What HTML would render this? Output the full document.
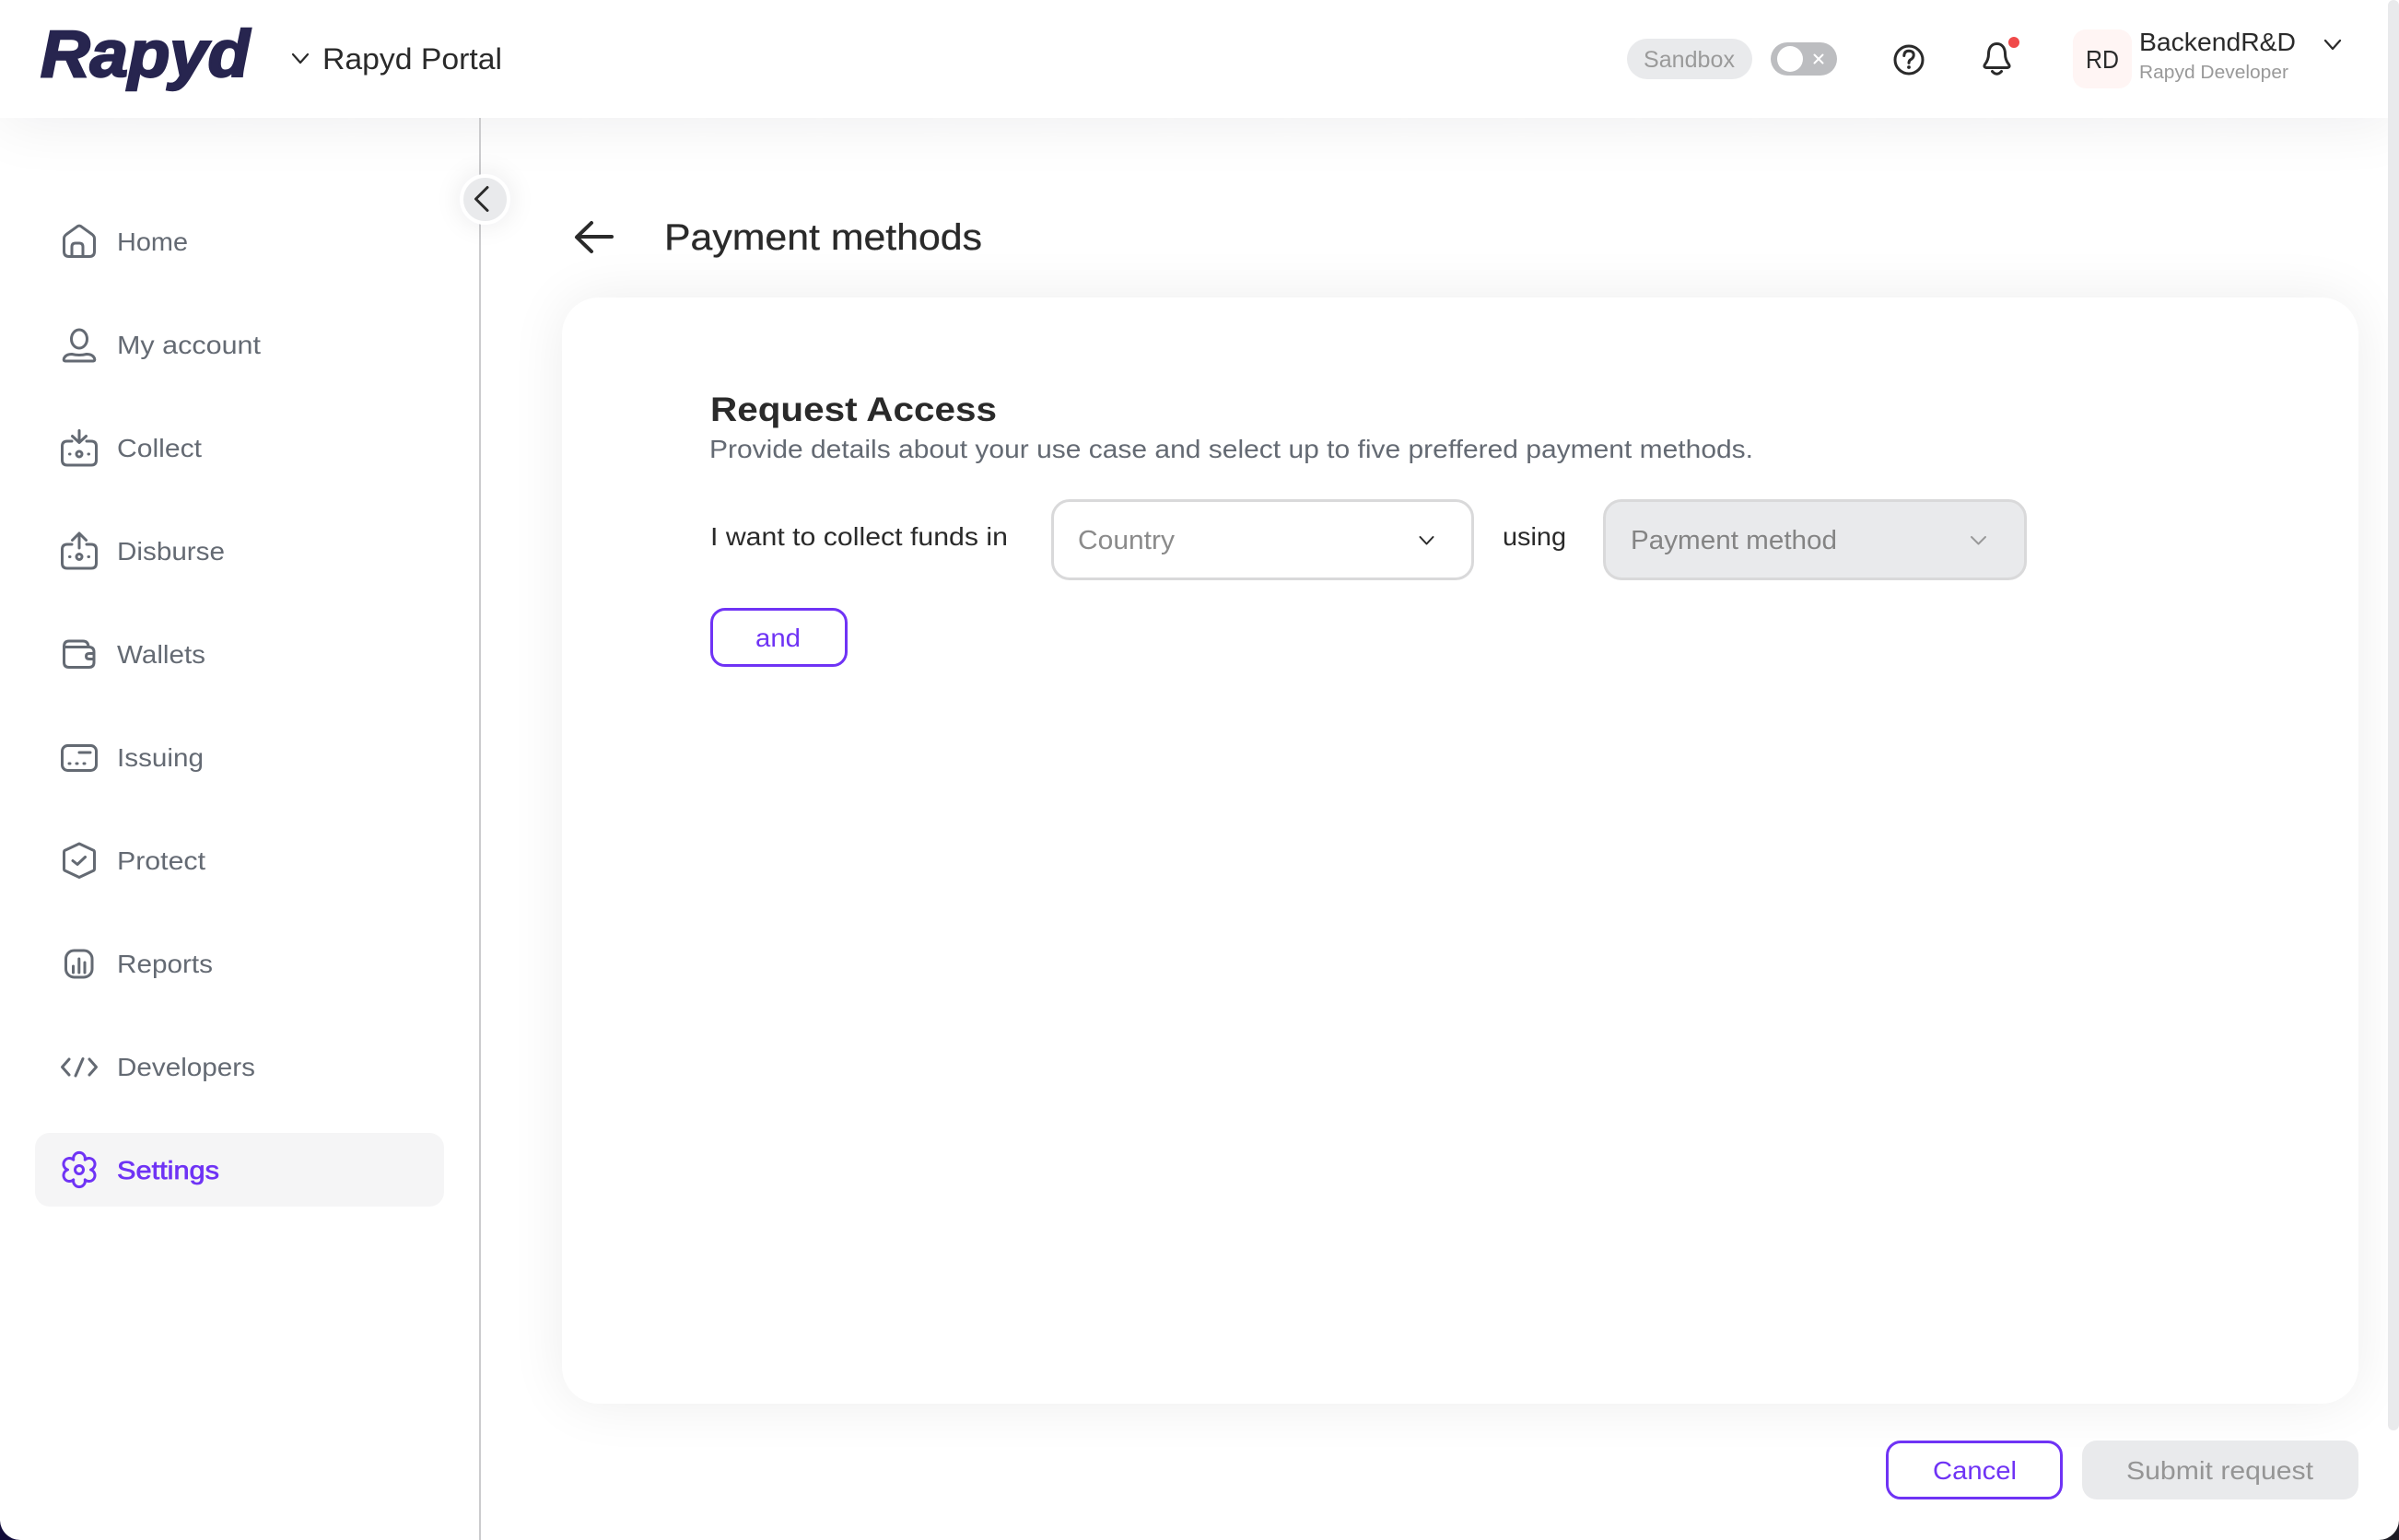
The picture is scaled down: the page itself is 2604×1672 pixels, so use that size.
<!DOCTYPE html>
<html lang="en">
<head>
<meta charset="utf-8">
<title>Payment methods</title>
<style>
html,body{margin:0;padding:0;width:2604px;height:1672px;overflow:hidden;background:#fff;font-family:"Liberation Sans",sans-serif}
.a{position:absolute;box-sizing:border-box}
#hdr{left:0;top:0;width:2604px;height:128px;background:#fff;box-shadow:0 0 70px rgba(20,20,30,.085);z-index:2}
#card{left:610px;top:323px;width:1950px;height:1201px;background:#fff;border-radius:40px;box-shadow:0 0 60px rgba(20,20,30,.075);z-index:1}
#div{left:520px;top:128px;width:2px;height:1544px;background:#cbcbcd;z-index:3}
#act{left:38px;top:1230px;width:444px;height:80px;background:#f5f5f6;border-radius:16px;z-index:3}
#col{left:499px;top:189px;width:55px;height:55px;border-radius:50%;background:#e9eaec;border:4px solid #fff;box-shadow:0 0 30px rgba(20,20,30,.09);z-index:4}
#sb{left:2592px;top:0;width:12px;height:1553px;background:#e9eaec;border-radius:6px;z-index:5}
#pill{left:1766px;top:42px;width:136px;height:44px;border-radius:22px;background:#e9eaec;z-index:4}
#tog{left:1922px;top:46px;width:72px;height:36px;border-radius:18px;background:#bcbdc0;z-index:4}
#knob{left:1929px;top:50px;width:28px;height:28px;border-radius:50%;background:#fff;z-index:5}
#av{left:2250px;top:32px;width:64px;height:64px;border-radius:14px;background:#fff5f4;z-index:4}
#s1{left:1141px;top:542px;width:459px;height:88px;border:3px solid #d9d9da;border-radius:20px;background:#fff;z-index:3}
#s2{left:1740px;top:542px;width:460px;height:88px;border:3px solid #d9d9da;border-radius:20px;background:#e9eaec;z-index:3}
#and{left:771px;top:660px;width:149px;height:64px;border:3px solid #6f33f5;border-radius:16px;background:#fff;z-index:3}
#can{left:2047px;top:1564px;width:192px;height:64px;border:3px solid #6f33f5;border-radius:16px;background:#fff;z-index:3}
#sub{left:2260px;top:1564px;width:300px;height:64px;border-radius:16px;background:#e9eaec;z-index:3}
svg{position:absolute;left:0;top:0;z-index:6}
text{font-family:"Liberation Sans",sans-serif;font-size:27.5px}
.n{fill:#646a73}
.d{fill:#2a2a2a}
.i{fill:none;stroke:#646a73;stroke-width:3;stroke-linecap:round;stroke-linejoin:round}
.k{fill:none;stroke:#2a2a2a;stroke-width:3;stroke-linecap:round;stroke-linejoin:round}
</style>
</head>
<body>
<div class="a" id="hdr"></div>
<div class="a" id="card"></div>
<div class="a" id="div"></div>
<div class="a" id="act"></div>
<div class="a" id="col"></div>
<div class="a" id="sb"></div>
<div class="a" id="pill"></div>
<div class="a" id="tog"></div>
<div class="a" id="knob"></div>
<div class="a" id="av"></div>
<div class="a" id="s1"></div>
<div class="a" id="s2"></div>
<div class="a" id="and"></div>
<div class="a" id="can"></div>
<div class="a" id="sub"></div>

<svg width="2604" height="1672" viewBox="0 0 2604 1672" xmlns="http://www.w3.org/2000/svg">
<!-- window corners -->
<path d="M0 1650V1672H22A22 22 0 0 1 0 1650Z" fill="#120c3a"/>
<path d="M2604 1650V1672H2582A22 22 0 0 0 2604 1650Z" fill="#1c1c24"/>

<!-- header -->
<text x="44" y="83" textLength="227" lengthAdjust="spacingAndGlyphs" style="font-size:71px;font-weight:700;font-style:italic;fill:#27254f;stroke:#27254f;stroke-width:2.4px">Rapyd</text>
<path class="k" d="M318 59L326 68L334 59" style="stroke-width:2.2"/>
<text class="d" x="350" y="75" textLength="195" lengthAdjust="spacingAndGlyphs" style="font-size:32.5px">Rapyd Portal</text>

<text x="1784" y="73" textLength="99" lengthAdjust="spacingAndGlyphs" style="font-size:25px;fill:#9a9a9a">Sandbox</text>
<path d="M1969.5 59.5L1978.5 68.5M1978.5 59.5L1969.5 68.5" fill="none" stroke="#fff" stroke-width="2" stroke-linecap="round"/>
<circle class="k" cx="2072" cy="65" r="15"/>
<path class="k" d="M2066.8 60.5Q2067 55.2 2072 55.2Q2077.4 55.4 2077.2 60Q2077 63 2073.8 64.8Q2072 66 2072 68.4"/>
<circle cx="2072" cy="73" r="1.9" fill="#2a2a2a"/>
<path class="k" d="M2167.5 47.5C2161.5 47.5 2158.5 52.5 2158.5 58.5C2158.5 64.5 2156.5 67.5 2154.5 70Q2152.8 73 2156.2 73.5H2178.8Q2182.2 73 2180.5 70C2178.5 67.5 2176.5 64.5 2176.5 58.5C2176.5 52.5 2173.5 47.5 2167.5 47.5Z"/>
<path class="k" d="M2162.5 77.5Q2167.5 83 2172.5 77.5"/>
<circle cx="2186" cy="46" r="6" fill="#f04a4a"/>
<text class="d" x="2264" y="74" textLength="36" lengthAdjust="spacingAndGlyphs">RD</text>
<text class="d" x="2322" y="55" textLength="170" lengthAdjust="spacingAndGlyphs">BackendR&amp;D</text>
<text x="2322" y="85" textLength="162" lengthAdjust="spacingAndGlyphs" style="font-size:20.5px;fill:#999">Rapyd Developer</text>
<path class="k" d="M2524 44L2532 53L2540 44" style="stroke-width:2.2"/>

<!-- collapse -->
<path class="k" d="M529 203.5L516.5 216L529 228.5"/>

<!-- title -->
<path class="k" d="M664 257H626.5M642 242L626 257.5L642 273" style="stroke-width:4"/>
<text class="d" x="721" y="271" textLength="345" lengthAdjust="spacingAndGlyphs" style="font-size:40px;stroke:#2a2a2a;stroke-width:.3px">Payment methods</text>

<!-- nav text -->
<text class="n" x="127" y="272" textLength="77" lengthAdjust="spacingAndGlyphs">Home</text>
<text class="n" x="127" y="384" textLength="156" lengthAdjust="spacingAndGlyphs">My account</text>
<text class="n" x="127" y="496" textLength="92" lengthAdjust="spacingAndGlyphs">Collect</text>
<text class="n" x="127" y="608" textLength="117" lengthAdjust="spacingAndGlyphs">Disburse</text>
<text class="n" x="127" y="720" textLength="96" lengthAdjust="spacingAndGlyphs">Wallets</text>
<text class="n" x="127" y="832" textLength="94" lengthAdjust="spacingAndGlyphs">Issuing</text>
<text class="n" x="127" y="944" textLength="96" lengthAdjust="spacingAndGlyphs">Protect</text>
<text class="n" x="127" y="1056" textLength="104" lengthAdjust="spacingAndGlyphs">Reports</text>
<text class="n" x="127" y="1168" textLength="150" lengthAdjust="spacingAndGlyphs">Developers</text>
<text x="127" y="1280" textLength="111" lengthAdjust="spacingAndGlyphs" style="fill:#6f33f5;stroke:#6f33f5;stroke-width:.7px">Settings</text>

<!-- nav icons -->
<g class="i">
<path d="M69.5 259Q69.5 256.5 72 254.5L84 245.8Q86 244.5 88 245.8L100 254.5Q102.5 256.5 102.5 259V273Q102.5 278.5 97 278.5H75Q69.5 278.5 69.5 273Z"/>
<path d="M78 278V268Q78 264 82 264H86Q90 264 90 268V278"/>

<ellipse cx="86" cy="368" rx="8.5" ry="10"/>
<path d="M71 392Q68.5 392 69.5 389Q71.5 384.5 78 384.5Q82 385.5 86 385.5Q90 385.5 94 384.5Q100.5 384.5 102.5 389Q103.5 392 101 392Z"/>

<path d="M78 479H73Q67.5 479 67.5 484.5V499.5Q67.5 505 73 505H99Q104.5 505 104.5 499.5V484.5Q104.5 479 99 479H94"/>
<path d="M86 467.5V480M78.5 473.5L86 480.5L93.5 473.5"/>
<circle cx="86" cy="493" r="3"/>
<path d="M75.5 493H76M96 493H96.5"/>

<path d="M78 591H73Q67.5 591 67.5 596.5V611.5Q67.5 617 73 617H99Q104.5 617 104.5 611.5V596.5Q104.5 591 99 591H94"/>
<path d="M86 595V579.5M78.5 586.5L86 579L93.5 586.5"/>
<circle cx="86" cy="604.5" r="3"/>
<path d="M75.5 604.5H76M96 604.5H96.5"/>

<path d="M69.5 702V719Q69.5 724.5 75 724.5H96.5Q102 724.5 102 719V708Q102 702.5 96.5 702.5H70"/>
<path d="M69.5 702Q69.5 696 75 696H90Q95.5 696 96 702"/>
<path d="M102 709.5H97Q93.5 709.5 93.5 712.5Q93.5 715.5 97 715.5H102"/>

<rect x="67.5" y="809.5" width="37" height="27" rx="6"/>
<path d="M86 817H98M75 829H76M83 829H84M91 829H92"/>

<path d="M86 916L102 923.5Q102.5 924 102.5 925V943.5Q102.5 944.5 102 945L86 952.5L70 945Q69.5 944.5 69.5 943.5V925Q69.5 924 70 923.5Z"/>
<path d="M79 934.5L84 938.5L92.5 930.5"/>

<rect x="71.5" y="1032" width="28.5" height="29" rx="9"/>
<path d="M79.5 1049V1056M85.8 1041V1056M92 1045V1056"/>

<path d="M75 1150L67.5 1158.5L75 1167M97 1150L104.5 1158.5L97 1167M90 1149.5L82 1168"/>
</g>
<g class="i" style="stroke:#6f33f5">
<path d="M79.75 1259.2A6.4 6.4 0 1 1 92.25 1259.2A6.4 6.4 0 1 1 98.5 1270A6.4 6.4 0 1 1 92.25 1280.8A6.4 6.4 0 1 1 79.75 1280.8A6.4 6.4 0 1 1 73.5 1270A6.4 6.4 0 1 1 79.75 1259.2Z"/>
<circle cx="86" cy="1270" r="4.5"/>
</g>

<!-- main -->
<text class="d" x="771" y="457" textLength="311" lengthAdjust="spacingAndGlyphs" style="font-size:37.5px;font-weight:700">Request Access</text>
<text x="770" y="497" textLength="1133" lengthAdjust="spacingAndGlyphs" style="fill:#646a73">Provide details about your use case and select up to five preffered payment methods.</text>
<text class="d" x="771" y="592" textLength="323" lengthAdjust="spacingAndGlyphs">I want to collect funds in</text>
<text x="1170" y="596" textLength="105" lengthAdjust="spacingAndGlyphs" style="font-size:28.5px;fill:#8b8b8b">Country</text>
<path class="k" d="M1541.5 583L1548.5 590.5L1555.5 583" style="stroke-width:2"/>
<text class="d" x="1631" y="592" textLength="69" lengthAdjust="spacingAndGlyphs">using</text>
<text x="1770" y="596" textLength="224" lengthAdjust="spacingAndGlyphs" style="font-size:28.5px;fill:#848484">Payment method</text>
<path d="M2140 583L2147.5 590.5L2155 583" fill="none" stroke="#999" stroke-width="2" stroke-linecap="round" stroke-linejoin="round"/>
<text x="820" y="702" textLength="49" lengthAdjust="spacingAndGlyphs" style="fill:#6f33f5">and</text>

<!-- footer -->
<text x="2098" y="1606" textLength="91" lengthAdjust="spacingAndGlyphs" style="fill:#6f33f5">Cancel</text>
<text x="2308" y="1606" textLength="203" lengthAdjust="spacingAndGlyphs" style="fill:#959595">Submit request</text>
</svg>
</body>
</html>
